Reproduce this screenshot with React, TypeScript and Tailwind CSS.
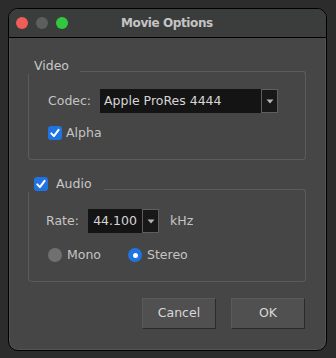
const font = { fontFamily: '"DejaVu Sans", Verdana, sans-serif' };

function Check() {
  return (
    <span className="flex h-[14px] w-[14px] items-center justify-center rounded-[3px] bg-[#1f74e2]">
      <svg width="14" height="14" viewBox="0 0 14 14">
        <path d="M3.3 7.4 L5.9 10.1 L10.6 3.8" fill="none" stroke="white" strokeWidth="2" strokeLinecap="round" strokeLinejoin="round" />
      </svg>
    </span>
  );
}

function Arrow() {
  return (
    <span className="flex h-[24px] w-[17px] items-center justify-center border border-[#5e5e5e] bg-[#181818]">
      <svg width="8" height="5" viewBox="0 0 8 5">
        <path d="M0.5 0.5 H7.5 L4 4.5 Z" fill="#b4b4b4" />
      </svg>
    </span>
  );
}

function GroupHeader({ width, children }: { width: string; children: React.ReactNode }) {
  return (
    <div className="flex h-[16px]">
      <div className={`flex items-center gap-[8px] pl-[6px] ${width}`}>{children}</div>
      <div className="h-[3px] flex-1 self-end rounded-tr-[4px] border-t border-r border-[#5c5c5c]" />
    </div>
  );
}

export default function App() {
  return (
    <div className="h-[358px] w-[336px] overflow-hidden bg-[#2c2c2c] pl-[8px] pt-[8px]" style={font}>
      <div className="flex h-[343px] w-[319px] flex-col overflow-hidden rounded-[10px] border border-black bg-[#464646] shadow-[inset_0_0_0_1px_rgba(255,255,255,0.08)]">
        <div className="flex h-[29px] shrink-0 items-center gap-[8px] border-b border-black bg-[#3a3d3c] pl-[7px]">
          <span className="h-[12px] w-[12px] rounded-full bg-[#ee5d58]" />
          <span className="h-[12px] w-[12px] rounded-full bg-[#5d5f5e]" />
          <span className="h-[12px] w-[12px] rounded-full bg-[#2fc83f]" />
          <span className="ml-[45px] text-[12px] font-bold tracking-[-0.4px] text-[#c4c4c4]">Movie Options</span>
        </div>

        <div className="flex flex-col pl-[19px] pr-[20px] pt-[20px] text-[12.5px] text-[#c4c4c4]">
          <GroupHeader width="w-[52px]">
            <span className="leading-[14px] text-[#c8c8c8]">Video</span>
          </GroupHeader>
          <div className="flex flex-col rounded-b-[4px] border-x border-b border-[#5c5c5c] pb-[19px] pl-[19px] pt-[15px]">
            <div className="flex h-[24px] items-center">
              <span className="w-[52px]">Codec:</span>
              <span className="flex h-[24px] w-[161px] items-center bg-[#141414] pl-[4px] text-[#d6d6d6]">Apple ProRes 4444</span>
              <Arrow />
            </div>
            <div className="mt-[13px] flex h-[14px] items-center gap-[4px]">
              <Check />
              <span>Alpha</span>
            </div>
          </div>

          <div className="mt-[16px]">
            <GroupHeader width="w-[76px]">
              <Check />
              <span className="leading-[14px] text-[#c8c8c8]">Audio</span>
            </GroupHeader>
          </div>
          <div className="flex flex-col rounded-b-[4px] border-x border-b border-[#5c5c5c] pb-[19px] pl-[17px] pt-[17px]">
            <div className="flex h-[24px] items-center">
              <span className="w-[42px]">Rate:</span>
              <span className="flex h-[24px] w-[54px] items-center justify-center bg-[#141414] text-[#d6d6d6]">44.100</span>
              <Arrow />
              <span className="ml-[11px]">kHz</span>
            </div>
            <div className="ml-[2px] mt-[15px] flex h-[14px] items-center">
              <div className="flex w-[80px] items-center gap-[5px]">
                <span className="h-[14px] w-[14px] rounded-full bg-[#707070]" />
                <span>Mono</span>
              </div>
              <div className="flex items-center gap-[5px]">
                <span className="flex h-[14px] w-[14px] items-center justify-center rounded-full bg-[#1f74e2]">
                  <span className="h-[5px] w-[5px] rounded-full bg-white" />
                </span>
                <span>Stereo</span>
              </div>
            </div>
          </div>

          <div className="mt-[16px] flex justify-end gap-[15px] pr-[1px]">
            <button className="h-[31px] w-[74px] border border-[#2a2a2a] border-l-[#5a5a5a] border-t-[#5a5a5a] bg-[#505050] text-[12.5px] text-[#d8d8d8]">
              Cancel
            </button>
            <button className="h-[31px] w-[74px] border border-[#2a2a2a] border-l-[#5a5a5a] border-t-[#5a5a5a] bg-[#505050] text-[12.5px] text-[#d8d8d8]">
              OK
            </button>
          </div>
        </div>
      </div>
    </div>
  );
}
